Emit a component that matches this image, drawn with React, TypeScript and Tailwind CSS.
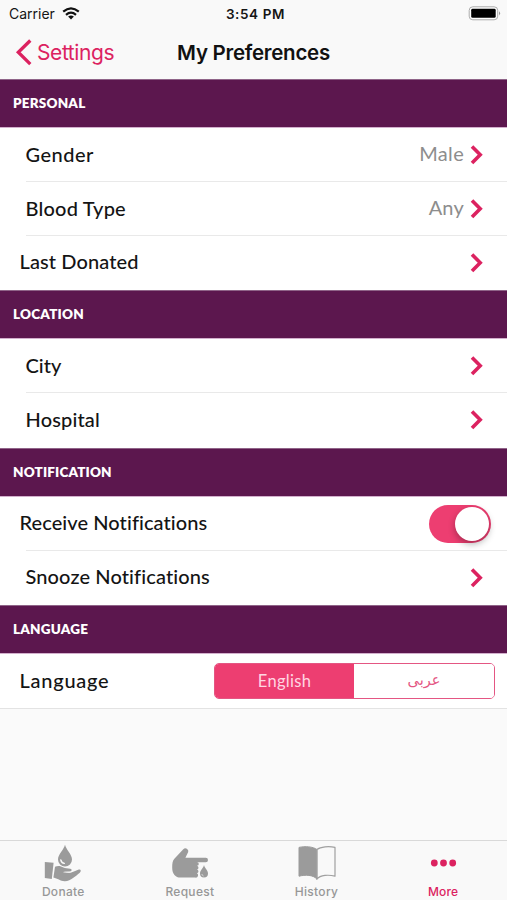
import React from "react";

const avenir = "font-['Lato','Open_Sans',sans-serif]";

function Chevron() {
  return (
    <svg className="block h-[20px] w-[14px] shrink-0" viewBox="0 0 14 20" fill="none">
      <path d="M2 1.5 L10.2 9.7 L2 17.9" stroke="#dc2260" strokeWidth="3.6" />
    </svg>
  );
}

function SectionHeader({ title, height, spacing }: { title: string; height: string; spacing: string }) {
  return (
    <h2
      className={`flex shrink-0 items-center border-y border-t-[#8f6488] border-b-[#d3b0cd] bg-[#5c174e] pb-px pl-[13px] text-[13.5px] font-extrabold text-white ${height} ${avenir}`}
    >
      <span className={spacing}>{title}</span>
    </h2>
  );
}

type RowProps = {
  label: string;
  height: string;
  spacing: string;
  lift?: string;
  inset?: boolean;
  line?: boolean;
  value?: string;
  valueSpacing?: string;
  children?: React.ReactNode;
};

function Row({ label, height, spacing, lift = "pb-[3px]", inset = true, line, value, valueSpacing = "", children }: RowProps) {
  return (
    <div className={`flex shrink-0 bg-white ${inset ? "pl-[25.5px]" : "pl-[19.5px]"} ${height}`}>
      <div className="relative flex flex-1 items-center pb-px">
        <span className={`text-[20px] leading-6 font-medium whitespace-nowrap text-[#141414] ${lift} ${avenir} ${spacing}`}>
          {label}
        </span>
        <div className="ml-auto flex items-center">
          {value && (
            <span className={`mr-[6px] pb-[3px] text-[20px] leading-6 text-[#8d8d8d] ${avenir} ${valueSpacing}`}>
              {value}
            </span>
          )}
          {children ?? (
            <div className="pr-[23px]">
              <Chevron />
            </div>
          )}
        </div>
        {line && (
          <div className={`absolute right-0 bottom-0 h-px bg-[#e9e9e9] ${inset ? "left-[0.5px]" : "left-[6.5px]"}`} />
        )}
      </div>
    </div>
  );
}

function DonateIcon() {
  return (
    <svg className="h-[38px] w-[38px]" viewBox="0 0 38 38" fill="#9b9b9b">
      <path d="M21 .8 C22 5.5 28 10.5 28 15.5 A7 7 0 0 1 14 15.5 C14 10.5 20 5.5 21 .8Z" />
      <path d="M16.8 16 Q17.5 18.9 20.3 19.4" stroke="#f9f9f9" strokeWidth="1.4" fill="none" strokeLinecap="round" />
      <path d="M.8 18 L9.6 18.8 L7.8 35 L.8 34Z" />
      <path d="M11 22.8 C14 21.3 17 22 19.5 23.5 C21 24.5 24 24.3 26.2 24.8 C28.3 25.3 28 27.2 26 27.5 L20 27.8 Q24.5 29.6 28 28.3 L34.2 25.8 C36.6 24.9 37.8 27.1 35.8 28.7 C31.5 32 27 36.8 21 37.2 C16.5 37.4 13.5 34.4 9.4 33.6Z" />
      <path d="M19.5 28.3 H26.3" stroke="#f9f9f9" strokeWidth=".6" />
    </svg>
  );
}

function RequestIcon() {
  return (
    <svg className="h-[32px] w-[38px]" viewBox="0 0 38 32" fill="#9b9b9b">
      <path d="M3.6 11.6 L12.3 2.2 A2.9 2.9 0 0 1 17.2 5 L14.4 10.8 H34.8 A2.1 2.1 0 0 1 34.8 15.2 H26 A1.8 1.8 0 0 1 26 18.8 A1.9 1.9 0 0 1 26 22.5 A1.9 1.9 0 0 1 26 26.2 A2.4 2.4 0 0 1 24.3 30.6 H9.5 C4.5 30.6 1.2 27 1.2 20.8 C1.2 17 1.4 13.9 3.6 11.6Z" />
      <path d="M33 18 C33.7 21.4 37 23.3 37 26.5 A4 4 0 0 1 29 26.5 C29 23.3 32.3 21.4 33 18Z" />
      <path d="M30.8 27 Q31.1 28.5 32.6 29" stroke="#f9f9f9" strokeWidth=".6" fill="none" />
    </svg>
  );
}

function HistoryIcon() {
  return (
    <svg className="ml-[2px] h-[36px] w-[38px]" viewBox="0 0 38 36">
      <path
        d="M18.9 4.5 C15 1.6 7 1 1 2.4 V31.2 C7 29.6 15.5 29.7 18.9 34.2Z"
        fill="#9b9b9b"
        stroke="#9b9b9b"
        strokeLinejoin="round"
      />
      <path
        d="M18.9 4.5 C22.5 1.6 31 1 37 2.4 V31.2 C31 29.6 22.3 29.7 18.9 34.2Z"
        fill="none"
        stroke="#a0a0a0"
        strokeWidth="1.2"
        strokeLinejoin="round"
      />
    </svg>
  );
}

function MoreIcon() {
  return (
    <svg className="mt-px h-[8px] w-[27px]" viewBox="0 0 27 8" fill="#dc2260">
      <circle cx="4.3" cy="4" r="3.4" />
      <circle cx="13.5" cy="4" r="3.4" />
      <circle cx="22.7" cy="4" r="3.4" />
    </svg>
  );
}

function Tab({ label, spacing, active, children }: { label: string; spacing: string; active?: boolean; children: React.ReactNode }) {
  return (
    <div className="flex w-[126.6px] flex-col items-center">
      <div className="flex h-[43px] items-center justify-center">{children}</div>
      <span
        className={`font-['Inter',sans-serif] text-[12px] leading-[15px] font-medium ${active ? "text-[#dc2260]" : "text-[#979797]"} ${spacing}`}
      >
        {label}
      </span>
    </div>
  );
}

export default function App() {
  return (
    <main className="flex h-[900px] w-[507px] flex-col overflow-hidden bg-[#fafafa]">
      <header className="h-[79px] shrink-0 bg-[#f9f9f9] font-['Inter',sans-serif]">
        <div className="grid h-[27px] grid-cols-3 items-center pr-[6px] pl-[9px] text-[#151515]">
          <div className="flex items-center gap-[7px]">
            <span className="text-[14px] leading-4">Carrier</span>
            <svg className="h-[13px] w-[18px]" viewBox="0 0 18 13" fill="none" stroke="#111" strokeWidth="2.2">
              <path d="M1.2 4.6 Q9 -2 16.8 4.6" />
              <path d="M4 7.8 Q9 3.5 14 7.8" />
              <path d="M6.1 9.6 Q9 7.5 11.9 9.6 L9 12.6Z" fill="#111" stroke="none" />
            </svg>
          </div>
          <span className="pl-px text-center text-[13.5px] leading-4 font-semibold tracking-[0.6px]">3:54 PM</span>
          <svg className="h-[15px] w-[33px] justify-self-end" viewBox="0 0 33 15">
            <rect x="1.2" y=".8" width="28.5" height="13" rx="3.6" fill="#fff" stroke="#aaa" />
            <rect x="3.2" y="2.8" width="24.5" height="9" rx="1.4" fill="#000" />
            <path d="M31 5.2 Q33.2 7.3 31 9.4Z" fill="#999" />
          </svg>
        </div>
        <div className="grid h-[51px] grid-cols-[1fr_auto_1fr] items-center">
          <div className="flex items-center pl-[15px] text-[#dc2260]">
            <svg className="h-[27px] w-[18px]" viewBox="0 0 18 27" fill="none">
              <path d="M15.3 1.5 L3.3 13.3 L15.3 25.1" stroke="#dc2260" strokeWidth="3.3" />
            </svg>
            <span className="ml-[4px] text-[21px] leading-6 tracking-[-0.4px]">Settings</span>
          </div>
          <h1 className="text-[20.5px] leading-6 font-semibold tracking-[-0.27px] text-[#111]">My Preferences</h1>
          <span />
        </div>
      </header>

      <SectionHeader title="PERSONAL" height="h-[49px]" spacing="tracking-[0.2px]" />
      <Row label="Gender" height="h-[54px]" spacing="tracking-[0.5px]" lift="pb-[2px]" value="Male" valueSpacing="tracking-[0.3px]" line />
      <Row label="Blood Type" height="h-[54px]" spacing="tracking-[0.2px]" lift="pb-[2px]" value="Any" valueSpacing="tracking-[0.2px]" line />
      <Row label="Last Donated" height="h-[54px]" spacing="tracking-[0.1px]" inset={false} />

      <SectionHeader title="LOCATION" height="h-[49px]" spacing="tracking-[0.2px]" />
      <Row label="City" height="h-[54px]" spacing="tracking-[0px]" lift="pb-px" line />
      <Row label="Hospital" height="h-[55px]" spacing="tracking-[0.15px]" />

      <SectionHeader title="NOTIFICATION" height="h-[49px]" spacing="tracking-[0.15px]" />
      <Row label="Receive Notifications" height="h-[54px]" spacing="tracking-[0.08px]" inset={false} line>
        <div className="mr-[16px] flex h-[38px] w-[62px] items-center justify-end rounded-full bg-[#ed3e71] pr-[2px]">
          <div className="h-[34px] w-[34px] rounded-full bg-white shadow-[0_3px_7px_rgba(0,0,0,0.3)]" />
        </div>
      </Row>
      <Row label="Snooze Notifications" height="h-[54px]" spacing="tracking-[0.12px]" />

      <SectionHeader title="LANGUAGE" height="h-[49px]" spacing="tracking-[0.2px]" />
      <Row label="Language" height="h-[54px]" spacing="tracking-[0.75px]" lift="pb-px" inset={false}>
        <div className="mr-[12px] flex h-[36px] w-[281px] overflow-hidden rounded-[5px] border border-[#e45683]">
          <div
            className={`flex w-[139px] items-center justify-center bg-[#ed3e71] pt-px text-[16.5px] text-[#ffd6e2] ${avenir}`}
          >
            <span className="tracking-[0.3px]">English</span>
          </div>
          <div
            lang="ar"
            dir="rtl"
            className="flex flex-1 items-center justify-center bg-white pt-px font-['DejaVu_Sans',sans-serif] text-[14.5px] text-[#e45683]"
          >
            عربى
          </div>
        </div>
      </Row>
      <div className="h-px shrink-0 bg-[#e3e3e3]" />

      <nav className="mt-auto flex h-[60px] shrink-0 border-t border-[#d9d9d9] bg-[#f9f9f9]">
        <Tab label="Donate" spacing="tracking-[0.3px]">
          <DonateIcon />
        </Tab>
        <Tab label="Request" spacing="tracking-[0.3px]">
          <RequestIcon />
        </Tab>
        <Tab label="History" spacing="tracking-[0.3px]">
          <HistoryIcon />
        </Tab>
        <Tab label="More" spacing="tracking-[0.1px]" active>
          <MoreIcon />
        </Tab>
      </nav>
    </main>
  );
}
